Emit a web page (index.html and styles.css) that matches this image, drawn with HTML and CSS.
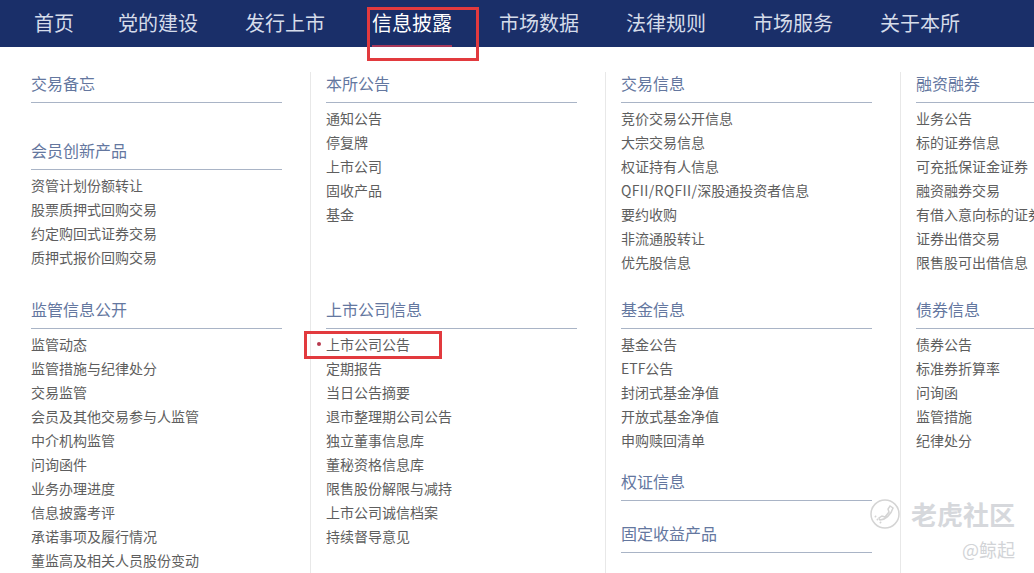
FILE: index.html
```html
<!DOCTYPE html>
<html>
<head>
    <meta charset="utf-8">
    <title>信息披露</title>
    <link rel="stylesheet" href="styles.css">
</head>
<body>

<div class="nav">
    <a class="first">首页</a>
    <a>党的建设</a>
    <a>发行上市</a>
    <a class="on">信息披露</a>
    <a>市场数据</a>
    <a>法律规则</a>
    <a>市场服务</a>
    <a>关于本所</a>
</div>

<div class="menu">
    <div class="col">
        <div class="top">
            <div class="tit">交易备忘</div>
            <ul class="none"></ul>
            <div class="tit">会员创新产品</div>
            <ul>
                <li>资管计划份额转让</li>
                <li>股票质押式回购交易</li>
                <li>约定购回式证券交易</li>
                <li>质押式报价回购交易</li>
            </ul>
        </div>
        <div class="tit">监管信息公开</div>
        <ul>
            <li>监管动态</li>
            <li>监管措施与纪律处分</li>
            <li>交易监管</li>
            <li>会员及其他交易参与人监管</li>
            <li>中介机构监管</li>
            <li>问询函件</li>
            <li>业务办理进度</li>
            <li>信息披露考评</li>
            <li>承诺事项及履行情况</li>
            <li>董监高及相关人员股份变动</li>
        </ul>
    </div>
    <div class="col">
        <div class="top">
            <div class="tit">本所公告</div>
            <ul>
                <li>通知公告</li>
                <li>停复牌</li>
                <li>上市公司</li>
                <li>固收产品</li>
                <li>基金</li>
            </ul>
        </div>
        <div class="tit">上市公司信息</div>
        <ul>
            <li class="cur">上市公司公告</li>
            <li>定期报告</li>
            <li>当日公告摘要</li>
            <li>退市整理期公司公告</li>
            <li>独立董事信息库</li>
            <li>董秘资格信息库</li>
            <li>限售股份解限与减持</li>
            <li>上市公司诚信档案</li>
            <li>持续督导意见</li>
        </ul>
    </div>
    <div class="col">
        <div class="top">
            <div class="tit">交易信息</div>
            <ul>
                <li>竞价交易公开信息</li>
                <li>大宗交易信息</li>
                <li>权证持有人信息</li>
                <li><span class="en">QFII/RQFII/</span>深股通投资者信息</li>
                <li>要约收购</li>
                <li>非流通股转让</li>
                <li>优先股信息</li>
            </ul>
        </div>
        <div class="tit">基金信息</div>
        <ul class="tight">
            <li>基金公告</li>
            <li>ETF公告</li>
            <li>封闭式基金净值</li>
            <li>开放式基金净值</li>
            <li>申购赎回清单</li>
        </ul>
        <div class="tit">权证信息</div>
        <ul class="none short"></ul>
        <div class="tit">固定收益产品</div>
    </div>
    <div class="col">
        <div class="top">
            <div class="tit">融资融券</div>
            <ul>
                <li>业务公告</li>
                <li>标的证券信息</li>
                <li>可充抵保证金证券</li>
                <li>融资融券交易</li>
                <li>有借入意向标的证券</li>
                <li>证券出借交易</li>
                <li>限售股可出借信息</li>
            </ul>
        </div>
        <div class="tit">债券信息</div>
        <ul>
            <li>债券公告</li>
            <li>标准券折算率</li>
            <li>问询函</li>
            <li>监管措施</li>
            <li>纪律处分</li>
        </ul>
    </div>
</div>

<div class="mark mark-nav"></div>
<div class="mark mark-item"></div>

<div class="wm">
    <svg class="wm-icon" width="32" height="32" viewBox="0 0 32 32" fill="none" stroke="#D4D4D4">
        <circle cx="15" cy="16" r="14" stroke-width="1.5"/>
        <path d="M10 22c5 0 11-5 13-12l-3-2-2 3 1 3-4 5-3-1-3 2z" stroke-width="1.5"/>
        <path d="M5 18l1 1M7 21l1 1M10 24l1 1" stroke-width="2"/>
    </svg>
    <div class="wm-name">老虎社区</div>
    <div class="wm-user">@鲸起</div>
</div>

</body>
</html>
```

FILE: styles.css
```css
html, body { margin: 0; padding: 0; height: 573px; overflow: hidden; background: #FFF; }
body { position: relative; font-family: "Noto Sans CJK SC", "Liberation Sans", sans-serif; }

.nav { display: flex; gap: 47px; height: 47px; padding-left: 34px; background: #1A2F69; }
.nav a { height: 47px; line-height: 45px; font-size: 20px; color: #D5DCEA; white-space: nowrap; box-sizing: border-box; }
.nav .first { margin-right: -3px; }
.nav .on { color: #FFF; border-bottom: 2px solid #A8385A; }

.menu { display: flex; width: 1200px; height: 501px; margin-top: 25px; }
.col { width: 279px; flex: none; padding-left: 15px; border-left: 1px solid #E8E8E8; }
.col:first-child { width: 279px; padding-left: 31px; border-left: 0; }
.top { height: 226px; }

.tit { width: 251px; height: 22px; line-height: 22px; padding-bottom: 8px; font-size: 16px; color: #64779F; border-bottom: 1px solid #A9B4C6; white-space: nowrap; }

ul { list-style: none; margin: 0 0 22px; padding: 3px 0 0; }
ul.none { height: 36px; margin: 0; padding: 0; }
ul.short { height: 21px; }
ul.tight { margin-bottom: 18px; }
li { position: relative; height: 24px; line-height: 24px; font-size: 14px; color: #5E5E5E; white-space: nowrap; }
li.cur::before { content: ""; position: absolute; left: -9px; top: 10px; width: 4px; height: 4px; border-radius: 50%; background: #B83A4E; }
.en { letter-spacing: .35px; }

.mark { position: absolute; box-sizing: border-box; border: 3px solid #E23A3E; }
.mark-nav { left: 367px; top: 7px; width: 112px; height: 54px; }
.mark-item { left: 304px; top: 331px; width: 138px; height: 28px; }

.wm { position: absolute; left: 870px; top: 498px; width: 145px; height: 64px; }
.wm-icon { position: absolute; left: 0; top: 0; }
.wm-name { position: absolute; right: 0; top: -1px; font-size: 26px; line-height: 34px; font-weight: 700; color: #D6D8DC; white-space: nowrap; }
.wm-user { position: absolute; right: 0; top: 39px; font-size: 18px; line-height: 24px; color: #D2D4D7; white-space: nowrap; }
```
